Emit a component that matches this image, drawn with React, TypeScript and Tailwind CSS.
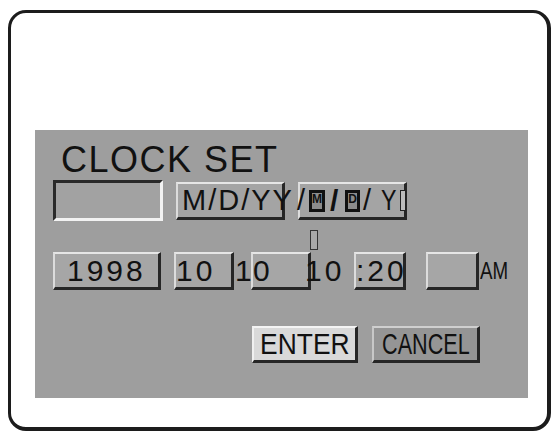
import React from "react";

const font = { fontFamily: '"Liberation Sans", Arial, sans-serif' };

// raised key: light top/left, dark bottom/right
const raised =
  "border-t-2 border-l-2 border-b-[3px] border-r-[3px] border-t-[#e6e6e6] border-l-[#dcdcdc] border-b-[#262626] border-r-[#262626]";

const BoxedGlyph: React.FC<{ ch: string; ml: string; w: string }> = ({ ch, ml, w }) => (
  <span
    className={`${ml} ${w} inline-flex items-start justify-center h-[22px] border-[3px] border-[#111] bg-[#8c8c8c] text-[12px] font-bold text-[#111] leading-none shrink-0`}
  >
    {ch}
  </span>
);

const App: React.FC = () => {
  return (
    <div className="w-[559px] h-[434px] bg-white overflow-hidden" style={font}>
      <div className="ml-[8px] mt-[10px] w-[543px] h-[421px] rounded-[18px] border-[3px] border-b-4 border-r-4 border-[#1c1c1c] bg-white">
        {/* gray panel */}
        <div className="ml-[24px] mt-[117px] w-[493px] h-[268px] bg-[#9e9e9e] pl-[18px] pt-[12px] text-[#111]">
          <div className="ml-[8px] h-[36px] text-[36px] leading-none tracking-[1.5px] whitespace-nowrap">
            CLOCK SET
          </div>

          {/* date format row */}
          <div className="mt-[2px] flex items-start">
            <div className="w-[110px] h-[41px] bg-[#a2a2a2] border-t-[3px] border-l-[3px] border-b-[3px] border-r-[3px] border-t-[#2a2a2a] border-l-[#2a2a2a] border-b-[#f2f2f2] border-r-[#f2f2f2]" />
            <div className={`ml-[13px] mt-[2px] w-[109px] h-[38px] bg-[#a4a4a4] ${raised} flex items-center`}>
              <span className="relative z-10 pl-[4px] text-[29px] leading-none tracking-[2px] whitespace-nowrap">
                M/D/YY
              </span>
            </div>
            <div className={`ml-[13px] mt-[2px] w-[109px] h-[38px] bg-[#a4a4a4] ${raised} flex items-center`}>
              <span className="relative z-10 -ml-[3px] text-[29px] leading-none">/</span>
              <BoxedGlyph ch="M" ml="ml-[4px]" w="w-[16px]" />
              <span className="ml-[2px] w-[14px] text-center text-[30px] leading-none font-bold shrink-0">/</span>
              <BoxedGlyph ch="D" ml="ml-[4px]" w="w-[15px]" />
              <span className="ml-[1px] w-[12px] text-center text-[29px] leading-none shrink-0">/</span>
              <span className="ml-[8px] w-[17px] inline-block origin-left scale-x-[0.8] text-[29px] leading-none shrink-0">
                Y
              </span>
              <span className="relative z-10 ml-[2px] w-[6px] h-[21px] border border-[#222] bg-[#bdbdbd] shrink-0" />
            </div>
          </div>

          {/* cursor marker */}
          <div className="ml-[257px] mt-[9px] w-[8px] h-[20px] border border-[#333] bg-[#a8a8a8]" />

          {/* date / time row */}
          <div className="mt-[2px] flex items-center text-[30px] leading-none tracking-[3px] whitespace-nowrap">
            <div className={`w-[108px] h-[38px] bg-[#a6a6a6] ${raised} flex items-center pl-[12px]`}>
              1998
            </div>
            <div className={`ml-[13px] w-[60px] h-[38px] bg-[#a6a6a6] ${raised} flex items-center`}>
              10
            </div>
            <span className="w-[17px] pl-[1px]">1</span>
            <div className={`w-[60px] h-[38px] bg-[#a6a6a6] ${raised} flex items-center`}>
              0
            </div>
            <span className="relative z-10 -ml-[6px] w-[49px]">10</span>
            <div className={`w-[52px] h-[38px] bg-[#a6a6a6] ${raised} flex items-center`}>
              <span className="relative z-10">:20</span>
            </div>
            <div className={`ml-[20px] w-[53px] h-[38px] bg-[#a6a6a6] ${raised}`} />
            <span className="ml-[1px] inline-block origin-left scale-x-[0.78] text-[24px] tracking-normal">
              AM
            </span>
          </div>

          {/* action buttons */}
          <div className="mt-[36px] mr-[48px] flex justify-end gap-[14px] text-[30px] leading-none">
            <button className="w-[106px] h-[37px] bg-[#d9d9d9] border-t-2 border-l-2 border-b-[3px] border-r-[3px] border-t-[#f4f4f4] border-l-[#f0f0f0] border-b-[#262626] border-r-[#262626] flex items-center justify-center">
              <span className="inline-block scale-x-[0.88]">ENTER</span>
            </button>
            <button className="w-[108px] h-[37px] bg-[#959595] border-t-2 border-l-2 border-b-[3px] border-r-[3px] border-t-[#cfcfcf] border-l-[#c8c8c8] border-b-[#262626] border-r-[#262626] flex items-center justify-center">
              <span className="inline-block scale-x-[0.72]">CANCEL</span>
            </button>
          </div>
        </div>
      </div>
    </div>
  );
};

export default App;
